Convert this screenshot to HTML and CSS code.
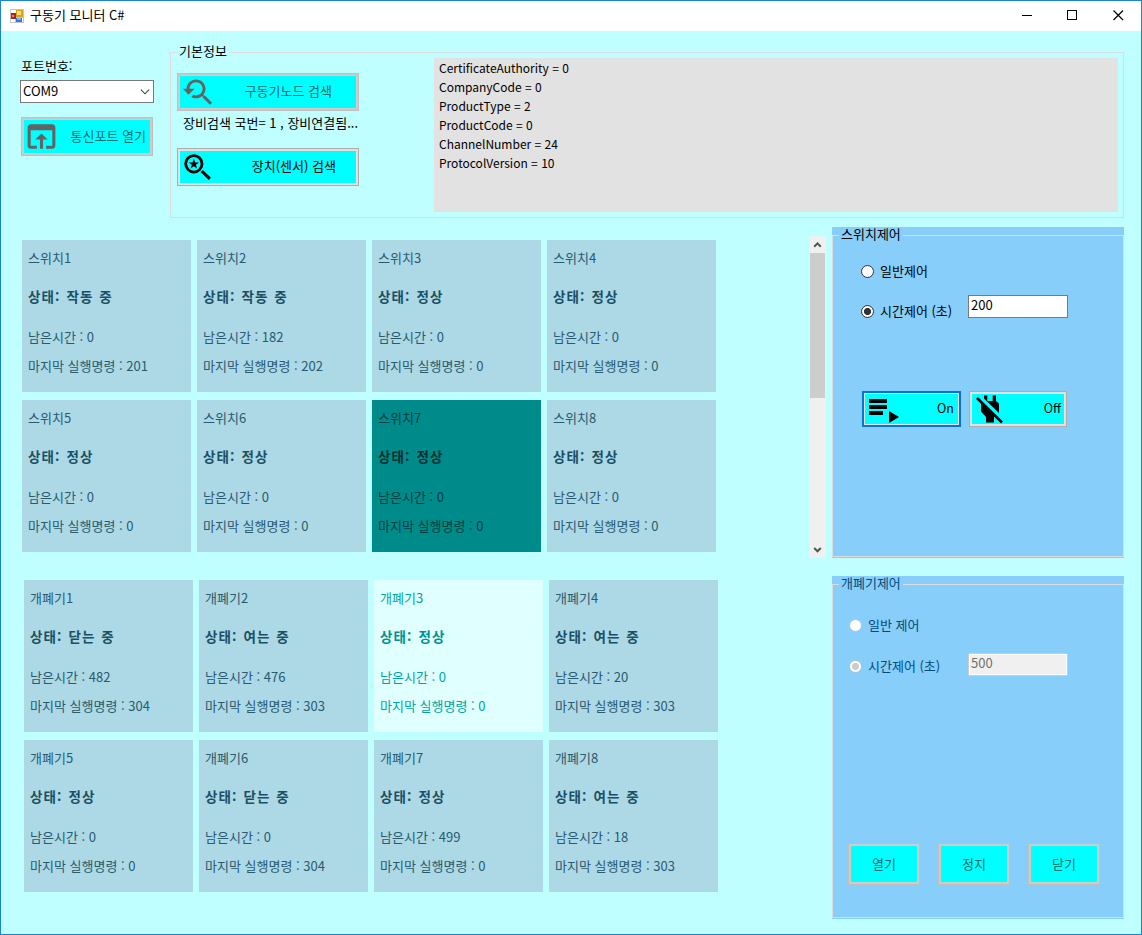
FILE: index.html
```html
<!DOCTYPE html>
<html lang="ko">
<head>
<meta charset="utf-8">
<title>구동기 모니터 C#</title>
<link rel="stylesheet" href="styles.css">
</head>
<body>
<div class="window">
  <header class="titlebar">
    <svg class="app-icon" width="14" height="14" viewBox="0 0 14 14"><rect width="14" height="14" fill="#c4c4c4"/><path d="M1 1h5v3H1zM1 10h4v3H1zM12 9h1v4h-1z" fill="#fff"/><rect x="6" y="1" width="7" height="7" fill="#dca21b"/><rect x="7" y="2" width="4" height="4" fill="#ffdf70"/><rect x="1" y="4" width="5" height="6" fill="#a72525"/><rect x="2" y="6" width="2" height="2" fill="#ef8578"/><rect x="6" y="9" width="6" height="4" fill="#3975d6"/><rect x="7" y="9" width="4" height="2" fill="#76b2ff"/></svg>
    <h1 class="title">구동기 모니터 C#</h1>
    <svg class="caption" width="104" height="12" viewBox="0 0 104 12" fill="none" stroke="#000" shape-rendering="crispEdges"><path d="M0 5.500h10M45.500 .5h9v9h-9z"/><path d="M91.500 .5l9.500 9.500M101 .5l-9.500 9.500" shape-rendering="auto" stroke-width="1.200"/></svg>
  </header>
  <main class="client">
    <div class="top">
      <div class="port">
        <label class="port-label">포트번호:</label>
        <div class="combo"><span>COM9</span><svg width="10" height="6" viewBox="0 0 10 6" fill="none" stroke="#444" stroke-width="1.100"><path d="M.9 .7l4.100 4.100L9.100 .7"/></svg></div>
        <button class="btn off port-btn"><svg class="icon" width="37" height="37" viewBox="0 0 24 24"><path d="M19 4H5c-1.110 0-2 .9-2 2v12c0 1.100.89 2 2 2h4v-2H5V8h14v10h-4v2h4c1.100 0 2-.9 2-2V6c0-1.100-.89-2-2-2zm-7 6l-4 4h3v6h2v-6h3l-4-4z"/></svg><span>통신포트 열기</span></button>
      </div>
      <fieldset class="group info">
        <legend>기본정보</legend>
        <div class="info-body">
          <div class="search">
            <button class="btn off search-btn node"><svg class="icon" width="35" height="35" viewBox="0 0 24 24"><path d="M17.010 14h-.8l-.27-.27c.98-1.140 1.570-2.610 1.570-4.230 0-3.590-2.910-6.500-6.500-6.500s-6.500 3-6.500 6.500H2l3.840 4 4.160-4H6.510C6.510 7 8.530 5 11.010 5s4.500 2.010 4.500 4.500c0 2.480-2.020 4.500-4.500 4.500-.65 0-1.260-.14-1.820-.38L7.710 15.100c.97.57 2.090.9 3.300.9 1.610 0 3.080-.59 4.220-1.570l.27.27v.79l5.010 4.990L22 19l-4.990-5z"/></svg><span>구동기노드 검색</span></button>
            <p class="status">장비검색 국번= 1 , 장비연결됨...</p>
            <button class="btn search-btn sensor"><svg class="icon" width="35" height="35" viewBox="0 0 24 24"><circle cx="9.500" cy="9.500" r="5.600" fill="none" stroke="#000" stroke-width="1.900"/><path d="M14 15.300l1.300-1.300h.7l5.200 5-1.500 1.500-5.200-5zM9.500 6l.9 2.500h2.600l-2.100 1.600.8 2.500-2.200-1.500-2.200 1.500.8-2.500L6 8.500h2.600z"/></svg><span>장치(센서) 검색</span></button>
          </div>
          <ul class="log">
            <li>CertificateAuthority = 0</li><li>CompanyCode = 0</li><li>ProductType = 2</li><li>ProductCode = 0</li><li>ChannelNumber = 24</li><li>ProtocolVersion = 10</li>
          </ul>
        </div>
      </fieldset>
    </div>
    <div class="bottom">
      <div class="devices">
        <div class="switches">
          <div class="cards">
            <article class="card"><p>스위치1</p><h2>상태: 작동 중</h2><p>남은시간 : 0</p><p>마지막 실행명령 : 201</p></article>
            <article class="card"><p>스위치2</p><h2>상태: 작동 중</h2><p>남은시간 : 182</p><p>마지막 실행명령 : 202</p></article>
            <article class="card"><p>스위치3</p><h2>상태: 정상</h2><p>남은시간 : 0</p><p>마지막 실행명령 : 0</p></article>
            <article class="card"><p>스위치4</p><h2>상태: 정상</h2><p>남은시간 : 0</p><p>마지막 실행명령 : 0</p></article>
            <article class="card"><p>스위치5</p><h2>상태: 정상</h2><p>남은시간 : 0</p><p>마지막 실행명령 : 0</p></article>
            <article class="card"><p>스위치6</p><h2>상태: 정상</h2><p>남은시간 : 0</p><p>마지막 실행명령 : 0</p></article>
            <article class="card selected"><p>스위치7</p><h2>상태: 정상</h2><p>남은시간 : 0</p><p>마지막 실행명령 : 0</p></article>
            <article class="card"><p>스위치8</p><h2>상태: 정상</h2><p>남은시간 : 0</p><p>마지막 실행명령 : 0</p></article>
          </div>
          <div class="scrollbar">
            <svg width="17" height="17" viewBox="0 0 17 17" fill="none" stroke="#555" stroke-width="2"><path d="M5.200 10.700l3.300-3.300 3.300 3.300"/></svg>
            <div class="thumb"></div>
            <svg width="17" height="17" viewBox="0 0 17 17" fill="none" stroke="#555" stroke-width="2"><path d="M5.200 7l3.300 3.300L11.800 7"/></svg>
          </div>
        </div>
        <div class="cards shutters">
          <article class="card"><p>개폐기1</p><h2>상태: 닫는 중</h2><p>남은시간 : 482</p><p>마지막 실행명령 : 304</p></article>
          <article class="card"><p>개폐기2</p><h2>상태: 여는 중</h2><p>남은시간 : 476</p><p>마지막 실행명령 : 303</p></article>
          <article class="card light"><p>개폐기3</p><h2>상태: 정상</h2><p>남은시간 : 0</p><p>마지막 실행명령 : 0</p></article>
          <article class="card"><p>개폐기4</p><h2>상태: 여는 중</h2><p>남은시간 : 20</p><p>마지막 실행명령 : 303</p></article>
          <article class="card"><p>개폐기5</p><h2>상태: 정상</h2><p>남은시간 : 0</p><p>마지막 실행명령 : 0</p></article>
          <article class="card"><p>개폐기6</p><h2>상태: 닫는 중</h2><p>남은시간 : 0</p><p>마지막 실행명령 : 304</p></article>
          <article class="card"><p>개폐기7</p><h2>상태: 정상</h2><p>남은시간 : 499</p><p>마지막 실행명령 : 0</p></article>
          <article class="card"><p>개폐기8</p><h2>상태: 여는 중</h2><p>남은시간 : 18</p><p>마지막 실행명령 : 303</p></article>
        </div>
      </div>
      <div class="controls">
        <section class="panel switch-panel">
          <fieldset class="group">
            <legend>스위치제어</legend>
            <div class="row row-a"><i class="radio"></i><span>일반제어</span></div>
            <div class="row row-b"><i class="radio on"></i><span class="time">시간제어 (초)</span><div class="input">200</div></div>
            <div class="power">
              <button class="btn default"><svg class="icon" width="36" height="30" viewBox="0 0 36 30"><path d="M3 5h18v4H3zM3 11h18v4H3zM3 17h14v4H3zM23 17l10 6-10 6z"/></svg><span>On</span></button>
              <button class="btn"><svg class="icon" width="34" height="30" viewBox="0 0 34 30"><path d="M12 1.500h3.300V7h5.400V1.500H24V7l3 2.500V19L12 4.500zM9 8v9.500l5 5.500v5.600h8V21z"/><path d="M5 4l25 24.500" stroke="#000" stroke-width="2.500"/></svg><span>Off</span></button>
            </div>
          </fieldset>
        </section>
        <section class="panel shutter-panel">
          <fieldset class="group">
            <legend>개폐기제어</legend>
            <div class="row row-a"><i class="radio"></i><span>일반 제어</span></div>
            <div class="row row-b"><i class="radio on"></i><span class="time">시간제어 (초)</span><div class="input">500</div></div>
            <div class="moves"><button class="btn off">열기</button><button class="btn off">정지</button><button class="btn off">닫기</button></div>
          </fieldset>
        </section>
      </div>
    </div>
  </main>
</div>
</body>
</html>
```
FILE: styles.css
```css
* { box-sizing: border-box; margin: 0; padding: 0; }
body { font: 13px/18px "Noto Sans CJK KR", sans-serif; color: #000; overflow: hidden; }
.window { width: 1142px; height: 935px; border: 1px solid #1883d7; background: #c0ffff; }
.titlebar { height: 30px; background: #fff; display: flex; align-items: center; padding: 0 15px 0 9px; }
.title { font-size: 13px; font-weight: 400; margin-left: 6px; flex: 1; padding-bottom: 2px; }
.caption { display: block; }
.client { padding: 13px 17px 0 0; }
.top { display: flex; height: 174px; }
.port { width: 169px; padding: 13px 16px 0 19px; }
.port-label { display: block; padding-left: 1px; }
.combo { height: 23px; margin-top: 5px; border: 1px solid #7a7a7a; background: #fff; display: flex; justify-content: space-between; align-items: center; padding: 0 3px 0 2px; }
.combo span { margin-top: -2px; }
.btn { display: flex; align-items: center; justify-content: space-between; border: 1px solid #adadad; box-shadow: inset 0 0 0 2px #e1e1e1; background: #0ff; color: #000; font: inherit; }
.btn.off { border-color: #bfbfbf; box-shadow: inset 0 0 0 2px #ccc; color: #006c6c; }
.btn .icon { flex: none; }
.btn span { padding-bottom: 2px; }
.btn.off .icon { fill: #636363; }
.port-btn { width: 132px; height: 39px; margin: 14px 0 0 1px; padding: 0 6px 0 1px; }
.group { border: 1px solid #dcdcdc; min-width: 0; }
.group legend { height: 17px; line-height: 13px; padding: 0 2px; margin-left: 6px; }
.info { width: 954px; height: 174px; }
.info-body { display: flex; margin-top: -3px; }
.search { width: 263px; padding: 15px 0 0 6px; }
.search-btn { width: 182px; height: 38px; padding: 0 26px 0 2px; }
.sensor { padding-right: 22px; }
.status { height: 37px; padding: 3px 0 0 6px; white-space: nowrap; }
.log { list-style: none; width: 684px; height: 154px; background: #e2e2e2; padding: 0 5px; line-height: 19px; font-size: 12px; }
.bottom { display: flex; margin-top: 9px; }
.devices { width: 831px; padding-top: 9px; }
.switches { display: flex; justify-content: space-between; height: 322px; padding: 0 6px 0 21px; }
.cards { display: grid; grid-template-columns: repeat(4, 169px); grid-auto-rows: 152px; gap: 8px 6px; align-content: start; padding-top: 4px; }
.shutters { padding: 22px 0 0 23px; }
.card { background: #add8e6; color: #285b6e; padding: 9px 6px; }
.card p { line-height: 18px; }
.card h2 { font-size: 13.5px; line-height: 20px; letter-spacing: 1.1px; word-spacing: 1px; color: #1a5064; margin: 19px 0 22px; }
.card p + p { margin-top: 11px; }
.card.selected { background: #008b8b; color: #003d40; }
.card.selected h2 { color: #00302f; }
.card.light { background: #e0ffff; color: #00a3a3; }
.card.light h2 { color: #009090; }
.scrollbar { width: 17px; height: 322px; background: #f0f0f0; display: flex; flex-direction: column; }
.scrollbar svg { flex: none; }
.thumb { height: 145px; margin: 0 1px auto; background: #cdcdcd; }
.controls { width: 292px; }
.panel { background: #87cefa; padding-bottom: 1px; }
.switch-panel { height: 331px; }
.shutter-panel { height: 343px; margin-top: 18px; color: #004b7d; }
.panel .group { height: 100%; }
.row { display: flex; align-items: center; height: 23px; }
.row span { padding-bottom: 1px; }
.radio { width: 13px; height: 13px; border: 1px solid #333; border-radius: 50%; background: #fff; margin-right: 6px; }
.radio.on { background: radial-gradient(circle, #333 0 3.2px, #fff 3.9px); }
.input { width: 100px; height: 23px; border: 1px solid #7a7a7a; background: #fff; padding-left: 2px; line-height: 18px; }
.switch-panel .row { padding-left: 28px; }
.switch-panel .row-a { margin-top: 16px; }
.switch-panel .row-b { margin-top: 17px; }
.time { width: 88px; white-space: nowrap; }
.row-b .input { margin-top: -10px; }
.power { display: flex; gap: 8px; margin: 68px 0 0 29px; }
.power .btn { width: 98px; height: 36px; padding: 0 5px 0 2px; font-size: 12.5px; }
.power .default { width: 99px; border: 2px solid #0078d7; box-shadow: inset 0 0 0 1px #e1e1e1; }
.shutter-panel .row { padding-left: 16px; }
.shutter-panel .row-a { margin-top: 21px; }
.shutter-panel .row-b { margin-top: 18px; }
.shutter-panel .radio { border-color: #a9c6dc; }
.shutter-panel .radio.on { background: radial-gradient(circle, #ccc 0 3.2px, #fff 3.9px); }
.shutter-panel .time { width: 100px; }
.shutter-panel .input { margin-top: -4px; border-color: #ccc; background: #f0f0f0; box-shadow: inset 0 0 0 1px #fff; color: #707070; }
.moves { display: flex; gap: 18px; margin: 165px 0 0 15px; }
.moves .btn { width: 72px; height: 42px; justify-content: center; padding-bottom: 1px; }
```
